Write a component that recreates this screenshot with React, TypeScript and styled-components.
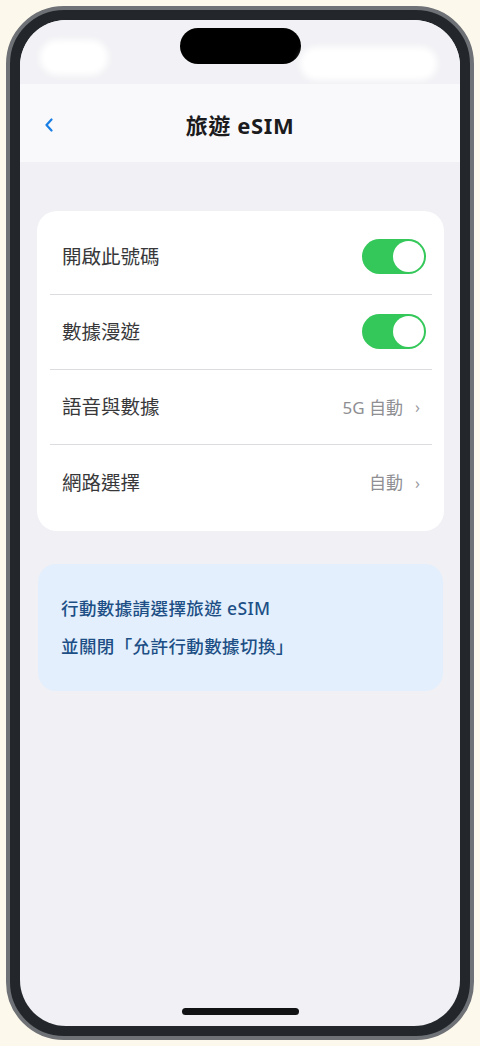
import React, { useState } from "react";
import styled, { createGlobalStyle } from "styled-components";

const GlobalStyle = createGlobalStyle`
  html, body { margin: 0; padding: 0; background: #fdf8ec; }
  body { font-family: "Noto Sans", "Noto Sans CJK TC", sans-serif; }
  * { box-sizing: border-box; }
`;

const Page = styled.div`
  width: 480px;
  height: 1046px;
  padding: 6px;
  background: #fdf8ec;
`;

const Phone = styled.div`
  width: 468px;
  height: 1034px;
  border: 4px solid #6e7175;
  border-radius: 58px;
  background: #23272c;
  padding: 10px;
`;

const Screen = styled.div`
  width: 100%;
  height: 100%;
  border-radius: 46px;
  overflow: hidden;
  background: #f0f0f5;
  display: flex;
  flex-direction: column;
`;

const StatusBar = styled.div`
  height: 64px;
  flex: none;
  background: #f2f2f6;
  display: flex;
  align-items: flex-start;
  padding-left: 20px;
`;

const Blob = styled.div<{ $w: number; $h: number; $top: number; $gap: number }>`
  width: ${(p) => p.$w}px;
  height: ${(p) => p.$h}px;
  margin-top: ${(p) => p.$top}px;
  margin-left: ${(p) => p.$gap}px;
  background: #ffffff;
  border-radius: 18px;
  filter: blur(3px);
`;

const Island = styled.div`
  width: 121px;
  height: 36px;
  margin-top: 8px;
  margin-left: 72px;
  background: #000;
  border-radius: 18px;
`;

const NavBar = styled.div`
  height: 78px;
  flex: none;
  background: #f9f9fb;
  display: grid;
  grid-template-columns: 1fr auto 1fr;
  align-items: center;
`;

const BackButton = styled.div`
  padding-left: 24px;
  padding-top: 4px;
  display: flex;
  align-items: center;
`;

const Title = styled.div`
  font-family: "Noto Sans", "Noto Sans CJK TC", sans-serif;
  font-size: 22px;
  font-weight: 700;
  color: #1c1c1e;
  letter-spacing: 0.6px;
  padding-top: 1px;
`;

const Content = styled.div`
  flex: 1;
  padding: 49px 16px 0 17px;
  display: flex;
  flex-direction: column;
  gap: 33px;
`;

const Card = styled.div`
  background: #ffffff;
  border-radius: 20px;
  padding: 9px 12px 11px 13px;
`;

const Row = styled.div<{ $last?: boolean }>`
  height: 75px;
  display: flex;
  align-items: center;
  justify-content: space-between;
  padding: 0 6px 0 12px;
  border-bottom: ${(p) => (p.$last ? "none" : "1px solid #dcdce0")};
`;

const Label = styled.div`
  font-family: "Noto Sans CJK TC", sans-serif;
  font-size: 19.5px;
  line-height: 1;
  color: #38383a;
  margin-top: -2px;
`;

const Value = styled.div`
  display: flex;
  align-items: center;
  gap: 12px;
  padding-right: 6px;
  margin-top: -2px;
  font-family: "Noto Sans", "Noto Sans CJK TC", sans-serif;
  font-size: 17px;
  color: #8e8e93;
`;

const Chevron = styled.span`
  font-size: 16px;
  color: #9a9aa0;
  line-height: 1;
  padding-top: 2px;
`;

const Toggle = styled.button<{ $on: boolean }>`
  width: 64px;
  height: 35px;
  border: none;
  padding: 2px;
  margin-top: -1px;
  border-radius: 18px;
  background: ${(p) => (p.$on ? "#34c759" : "#e5e5ea")};
  display: flex;
  justify-content: ${(p) => (p.$on ? "flex-end" : "flex-start")};
  align-items: center;
  cursor: pointer;
`;

const Thumb = styled.span`
  width: 31px;
  height: 31px;
  border-radius: 50%;
  background: #ffffff;
`;

const InfoBox = styled.div`
  background: #e3effc;
  border-radius: 18px;
  margin-right: 1px;
  margin-left: 1px;
  padding: 25px 24px 26px 23px;
  font-family: "Noto Sans", "Noto Sans CJK TC", sans-serif;
  font-size: 17.5px;
  font-weight: 500;
  line-height: 38px;
  letter-spacing: 0.4px;
  color: #1d4f86;
`;

const HomeBar = styled.div`
  flex: none;
  height: 7px;
  width: 117px;
  margin: 0 auto 11px;
  border-radius: 4px;
  background: #111214;
`;

const Switch: React.FC<{ initial: boolean }> = ({ initial }) => {
  const [on, setOn] = useState(initial);
  return (
    <Toggle $on={on} onClick={() => setOn(!on)} aria-pressed={on}>
      <Thumb />
    </Toggle>
  );
};

export default function App() {
  return (
    <>
      <GlobalStyle />
      <Page>
        <Phone>
          <Screen>
            <StatusBar>
              <Blob $w={68} $h={35} $top={20} $gap={0} />
              <Island />
              <Blob $w={137} $h={33} $top={27} $gap={-1} />
            </StatusBar>
            <NavBar>
              <BackButton>
                <svg width="10" height="14" viewBox="0 0 10 14">
                  <polyline
                    points="7.5,1.5 2.5,7 7.5,12.5"
                    fill="none"
                    stroke="#1a7fe4"
                    strokeWidth="2.2"
                    strokeLinecap="round"
                    strokeLinejoin="round"
                  />
                </svg>
              </BackButton>
              <Title>旅遊 eSIM</Title>
              <div />
            </NavBar>
            <Content>
              <Card>
                <Row>
                  <Label>開啟此號碼</Label>
                  <Switch initial />
                </Row>
                <Row>
                  <Label>數據漫遊</Label>
                  <Switch initial />
                </Row>
                <Row>
                  <Label>語音與數據</Label>
                  <Value>
                    5G 自動<Chevron>›</Chevron>
                  </Value>
                </Row>
                <Row $last>
                  <Label>網路選擇</Label>
                  <Value>
                    自動<Chevron>›</Chevron>
                  </Value>
                </Row>
              </Card>
              <InfoBox>
                <div>行動數據請選擇旅遊 eSIM</div>
                <div>並關閉「允許行動數據切換」</div>
              </InfoBox>
            </Content>
            <HomeBar />
          </Screen>
        </Phone>
      </Page>
    </>
  );
}
